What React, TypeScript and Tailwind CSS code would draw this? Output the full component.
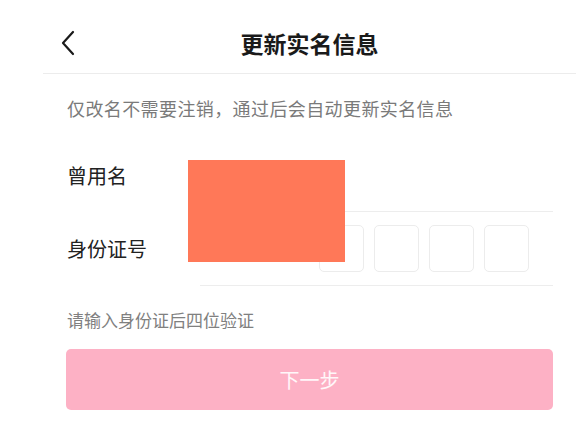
const CODE_BOXES = [0, 1, 2, 3];

function BackIcon() {
  return (
    <svg width="16" height="26" viewBox="0 0 16 26" fill="none">
      <polyline
        points="13,2 3,13 13,24"
        stroke="#1a1a1a"
        strokeWidth="2.2"
        strokeLinecap="round"
        strokeLinejoin="round"
      />
    </svg>
  );
}

export default function App() {
  return (
    <div
      className="relative w-[580px] h-[432px] overflow-hidden bg-white"
      style={{ fontFamily: '"Noto Sans CJK SC", "Noto Sans", sans-serif' }}
    >
      {/* header */}
      <div className="relative ml-[43px] mr-[4px] h-[74px] pt-[13px] border-b border-[#ececec]">
        <div className="relative flex h-[60px] items-center justify-center">
          <button className="absolute left-[17px] top-[17px]">
            <BackIcon />
          </button>
          <h1 className="text-[23px] font-bold leading-none text-[#1a1a1a]">更新实名信息</h1>
        </div>
      </div>

      <div className="pl-[67px] pr-[27px]">
        <p className="mt-[22px] text-[18px] leading-[24px] tracking-[0.4px] text-[#7a7a7a]">
          仅改名不需要注销，通过后会自动更新实名信息
        </p>

        {/* former name row */}
        <div className="mt-[20px] flex h-[72px]">
          <div className="flex w-[133px] items-center text-[20px] text-[#222]">曾用名</div>
          <div className="flex-1 border-b border-[#ededed]" />
        </div>

        {/* id number row */}
        <div className="flex h-[74px]">
          <div className="flex w-[133px] items-center text-[20px] text-[#222]">身份证号</div>
          <div className="flex flex-1 items-center justify-end gap-[10px] border-b border-[#ededed] pr-[24px]">
            {CODE_BOXES.map((i) => (
              <div
                key={i}
                className="h-[47px] w-[45px] rounded-[5px] border border-[#ececec] bg-white"
              />
            ))}
          </div>
        </div>

        <p className="mt-[22px] text-[17px] leading-[24px] text-[#808080]">请输入身份证后四位验证</p>

        <button className="mt-[17px] flex h-[61px] w-[487px] -ml-[1px] items-center justify-center rounded-[5px] bg-[#fdb1c5] text-[20px] text-white/90">
          下一步
        </button>
      </div>

      {/* redaction block */}
      <div className="absolute left-[188px] top-[160px] h-[102px] w-[157px] bg-[#ff7858]" />
    </div>
  );
}
